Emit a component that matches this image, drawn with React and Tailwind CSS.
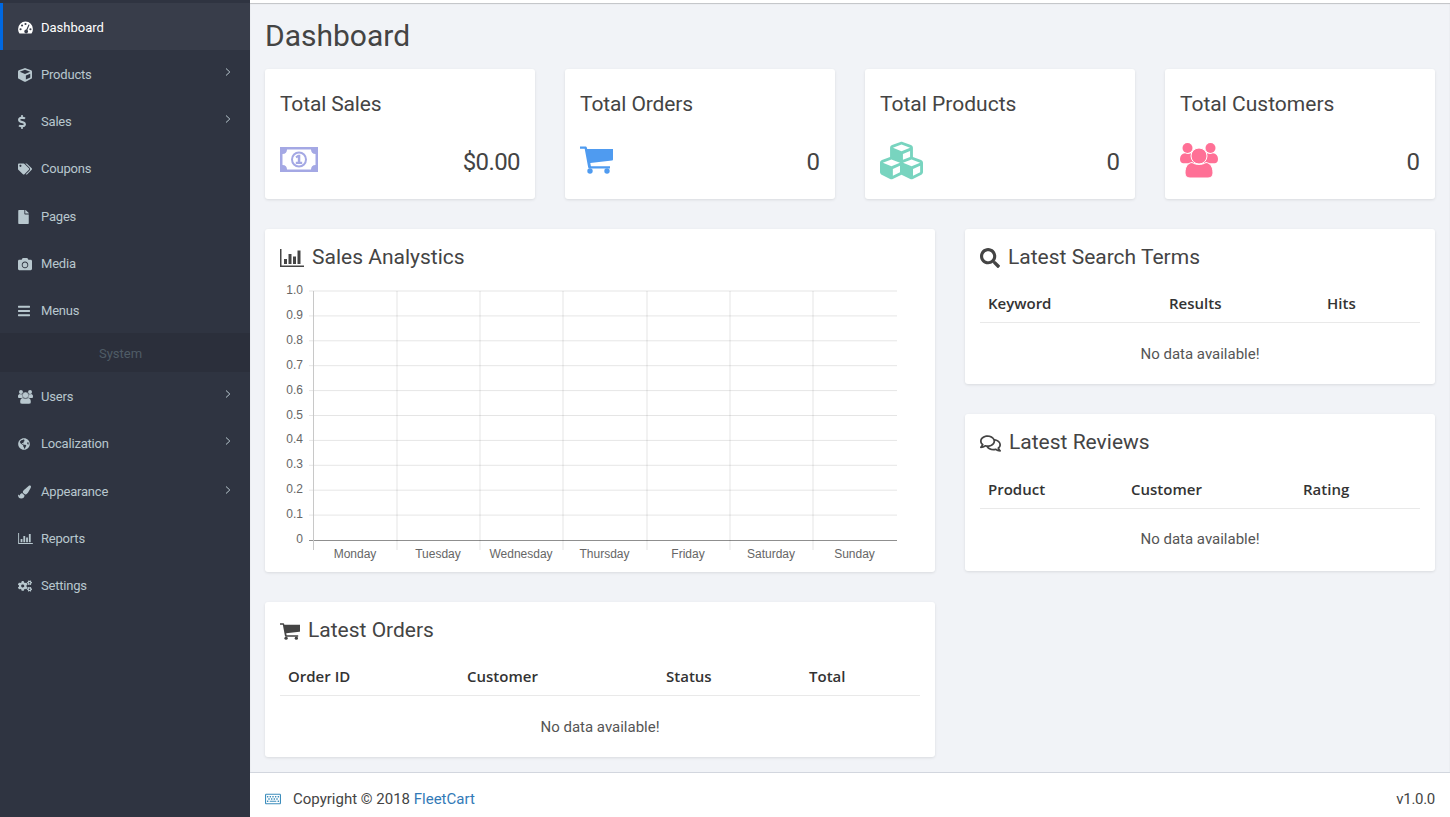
import React from "react";
import { FaCube, FaDollarSign, FaTags, FaFile, FaCamera, FaBars, FaGlobeAmericas, FaPaintBrush, FaCogs, FaCubes, FaSearch, FaRegComments, FaRegKeyboard } from "react-icons/fa";

function BarChartIcon({ className }) {
  return (
    <svg viewBox="0 0 24 18" className={className} fill="currentColor">
      <path d="M0 0h1.5v16.5H24V18H0z" />
      <path d="M4 10h3v5H4zM8.5 5h3v10h-3zM13 7.5h3V15h-3zM17.5 1.5h3V15h-3z" />
    </svg>
  );
}

function GaugeIcon({ className }) {
  return (
    <svg viewBox="0 0 14 12" className={className} fill="currentColor">
      <path d="M7 .4a6.9 6.9 0 0 1 6.9 6.9c0 1.6-.5 3-1.3 4.3H1.4C.6 10.300.1 8.900.1 7.300A6.900 6.900 0 0 1 7 .4z" />
      <g fill="#383d4a">
        <circle cx="2.400" cy="7.600" r="1" />
        <circle cx="3.800" cy="4.100" r="1" />
        <circle cx="7" cy="2.700" r="1" />
        <circle cx="11.600" cy="7.600" r="1" />
        <path d="M9.800 3.100l1 .4-2 4.800a1.800 1.800 0 1 1-1-.4z" />
      </g>
    </svg>
  );
}

function UsersIcon({ className, gap = "#ffffff" }) {
  return (
    <svg viewBox="0 0 38 35" className={className} fill="currentColor">
      <circle cx="7.500" cy="5" r="5" />
      <circle cx="30.500" cy="5" r="5" />
      <path d="M0 16c0-3.500 2-5.500 5-5.800 2 1 4 1 6 0 2 .3 4 2 4 5v5H3c-2 0-3-2-3-4.200zM38 16c0-3.500-2-5.500-5-5.800-2 1-4 1-6 0-2 .3-4 2-4 5v5h12c2 0 3-2 3-4.200z" />
      <circle cx="19" cy="13" r="8" stroke={gap} strokeWidth="1" />
      <path d="M5 30c0-6 2.500-10 7-10.500 4 2.600 10 2.600 14 0 4.500.5 7 4.500 7 10.500 0 3-2 5-5 5H10c-3 0-5-2-5-5z" stroke={gap} strokeWidth="1" />
    </svg>
  );
}

function BillIcon({ className }) {
  return (
    <svg viewBox="0 0 38 25" className={className}>
      <rect width="38" height="25" fill="#a4a8e4" />
      <path d="M7 2.500h24c0 2.500 1.500 4.500 4.500 4.500v11c-3 0-4.500 2-4.500 4.500H7c0-2.500-1.500-4.500-4.500-4.500V7c3 0 4.500-2 4.500-4.500z" fill="#fff" />
      <circle cx="19" cy="12.500" r="7" fill="#fff" stroke="#a4a8e4" strokeWidth="2" />
      <path d="M15.800 17h6.400v-2.200h-1.900V7.700h-2.300l-2.600 1.900 1.100 1.700 1.300-.9v4.400h-2z" fill="#a4a8e4" />
    </svg>
  );
}

function CartIcon({ className }) {
  return (
    <svg viewBox="0 0 33 28" className={className} fill="currentColor">
      <path d="M0 .5h5.700c.5 0 .9.300 1 .8L7.200 3H33v10.500c0 .6-.4 1-1 1.100L10.300 17l.5 2.700c0 .4.300.6.700.6H30v2.200H10c-1 0-1.700-.7-1.900-1.600L4.700 2.700H0z" />
      <circle cx="10" cy="25" r="2.700" />
      <circle cx="27" cy="25" r="2.700" />
    </svg>
  );
}

function Chevron({ className }) {
  return (
    <svg viewBox="0 0 6 8" className={className} fill="none" stroke="currentColor" strokeWidth="1">
      <path d="M1 .5L4.800 4 1 7.500" />
    </svg>
  );
}

function Nav({ icon, label, active, arrow, h = "h-[47px]", pt = "pt-[2px]", tr = "tracking-[-0.2px]" }) {
  return (
    <div className={`flex items-center ${h} ${pt} pl-[18px] pr-[19px] text-[13px] relative ${active ? "bg-[#383d4a] text-white" : "text-[#b8c7ce]"}`}>
      {active && <span className="absolute left-0 top-0 bottom-0 w-[3px] bg-[#0068e1]" />}
      <span className="w-[23px] flex items-center shrink-0">{icon}</span>
      <span className={tr}>{label}</span>
      {arrow && <Chevron className="ml-auto mb-[5px] w-[6px] h-[8px]" />}
    </div>
  );
}

function StatCard({ title, value, icon, tr = "", vtr = "" }) {
  return (
    <div className="bg-white rounded-[3px] shadow-[0_1px_3px_rgba(0,0,0,0.1)] h-[130px] px-[15px] pt-[21px]">
      <div className={`text-[21px] leading-[28px] text-[#444] ${tr}`}>{title}</div>
      <div className="flex items-center justify-between mt-[22px] h-[44px]">
        <div className="mb-[4px]">{icon}</div>
        <span className={`text-[24px] text-[#444] ${vtr}`}>{value}</span>
      </div>
    </div>
  );
}

function Panel({ icon, title, children, className = "", tr = "" }) {
  return (
    <div className={`bg-white rounded-[3px] shadow-[0_1px_3px_rgba(0,0,0,0.1)] px-[15px] ${className}`}>
      <div className="flex items-center h-[56px] pt-[2px] text-[21px] text-[#444]">
        {icon}
        <span className={tr}>{title}</span>
      </div>
      {children}
    </div>
  );
}

function EmptyTable({ cols, headers, mt = "", pt = "pt-[2px]" }) {
  return (
    <div className={mt}>
      <div className={`grid ${cols} h-[38px] items-center border-b border-[#e9e9e9] font-['Open_Sans',sans-serif] font-semibold text-[15px] text-[#333]`}>
        {headers.map((h) => <div key={h} className="pl-[8px]">{h}</div>)}
      </div>
      <div className={`h-[61px] flex items-center justify-center text-[15px] text-[#555] ${pt}`}>No data available!</div>
    </div>
  );
}

function Chart() {
  const xs = [314, 397, 480, 563, 647, 730, 813, 897];
  const ys = Array.from({ length: 11 }, (_, i) => 291 + i * 24.9);
  const yl = ["1.0", "0.9", "0.8", "0.7", "0.6", "0.5", "0.4", "0.3", "0.2", "0.1", "0"];
  const days = ["Monday", "Tuesday", "Wednesday", "Thursday", "Friday", "Saturday", "Sunday"];
  return (
    <svg width="640" height="280" viewBox="280 284 640 280" className="block" style={{ fontFamily: "'Liberation Sans',sans-serif" }}>
      {ys.map((y, i) => (
        <line key={i} x1="309" x2="897" y1={i === 10 ? 540.5 : y} y2={i === 10 ? 540.5 : y} stroke={i === 10 ? "#8f8f8f" : "rgba(0,0,0,0.1)"} />
      ))}
      {xs.slice(0, 7).map((x, i) => (
        <line key={x} x1={i === 0 ? x - 0.5 : x} x2={i === 0 ? x - 0.5 : x} y1="291" y2="550" stroke={i === 0 ? "#c8c8c8" : "rgba(0,0,0,0.1)"} />
      ))}
      {ys.map((y, i) => (
        <text key={i} x="303" y={y + 3} textAnchor="end" fontSize="12" fill="#666">{yl[i]}</text>
      ))}
      {days.map((d, i) => (
        <text key={d} x={(xs[i] + xs[i + 1]) / 2 - 0.5} y="558" textAnchor="middle" fontSize="12" fill="#666">{d}</text>
      ))}
    </svg>
  );
}

export default function App() {
  const side = "w-[14px] h-[14px]";
  return (
    <div className="flex h-[817px] w-[1450px] overflow-hidden bg-[#f1f3f7] font-['Roboto',sans-serif]">
      <aside className="w-[250px] shrink-0 bg-[#2f3441] pt-[3px]">
        <Nav icon={<GaugeIcon className="w-[15px] h-[13px]" />} label="Dashboard" active tr="" />
        <Nav icon={<FaCube className={side} />} label="Products" arrow />
        <Nav icon={<FaDollarSign className="w-[8px] h-[14px]" />} label="Sales" arrow />
        <Nav icon={<FaTags className={side} />} label="Coupons" />
        <Nav icon={<FaFile className="w-[11px] h-[14px]" />} label="Pages" h="h-[48px]" pt="pt-[4px]" />
        <Nav icon={<FaCamera className={side} />} label="Media" />
        <Nav icon={<FaBars className="w-[12px] h-[14px]" />} label="Menus" />
        <div className="h-[39px] bg-[#2b2f3b] flex items-center justify-center text-[13px] text-[#4f5c66] pr-[9px] pt-[2px]">System</div>
        <Nav icon={<UsersIcon className="w-[15px] h-[14px] text-[#b8c7ce]" gap="#2f3441" />} label="Users" arrow />
        <Nav icon={<FaGlobeAmericas className="w-[12px] h-[12px]" />} label="Localization" arrow />
        <Nav icon={<FaPaintBrush className="w-[13px] h-[14px]" />} label="Appearance" arrow h="h-[48px]" pt="pt-[4px]" />
        <Nav icon={<BarChartIcon className="w-[15px] h-[11px]" />} label="Reports" />
        <Nav icon={<FaCogs className={side} />} label="Settings" />
      </aside>
      <div className="flex-1 flex flex-col min-w-0">
        <main className="flex-1 px-[15px] border-t-[3px] border-t-white shadow-[inset_0_1px_1px_rgba(0,0,0,0.2)]">
          <h1 className="text-[30px] leading-[33px] text-[#444] mt-[16px] mb-[17px]">Dashboard</h1>
          <div className="grid grid-cols-4 gap-[30px]">
            <StatCard title="Total Sales" value="$0.00" tr="tracking-[-0.15px]" vtr="tracking-[-0.6px]" icon={<BillIcon className="w-[38px] h-[25px] mb-[2px]" />} />
            <StatCard title="Total Orders" value="0" tr="tracking-[-0.12px]" icon={<CartIcon className="w-[33px] h-[28px] text-[#4f9bf0]" />} />
            <StatCard title="Total Products" value="0" icon={<FaCubes className="w-[43px] h-[43px] text-[#78d4bf]" />} />
            <StatCard title="Total Customers" value="0" icon={<UsersIcon className="w-[38px] h-[35px] text-[#ff7096]" />} />
          </div>
          <div className="flex gap-[30px] mt-[30px]">
            <div className="w-[670px] flex flex-col gap-[30px]">
              <Panel title="Sales Analystics" className="h-[343px]" icon={<BarChartIcon className="w-[24px] h-[18px] mr-[8px] text-[#444]" />}>
                <div className="-mt-[1px]"><Chart /></div>
              </Panel>
              <Panel title="Latest Orders" className="h-[155px]" icon={<CartIcon className="w-[20px] h-[17px] mr-[8px] text-[#444]" />}>
                <EmptyTable cols="grid-cols-[179px_199px_143px_119px]" headers={["Order ID", "Customer", "Status", "Total"]} />
              </Panel>
            </div>
            <div className="w-[470px] flex flex-col gap-[30px]">
              <Panel title="Latest Search Terms" className="h-[155px]" icon={<FaSearch className="w-[20px] h-[20px] mr-[8px] text-[#444]" />}>
                <EmptyTable cols="grid-cols-[181px_158px_101px]" headers={["Keyword", "Results", "Hits"]} />
              </Panel>
              <Panel title="Latest Reviews" className="h-[157px]" icon={<FaRegComments className="w-[21px] h-[21px] mr-[8px] text-[#444]" />}>
                <EmptyTable mt="mt-[1px]" pt="" cols="grid-cols-[143px_172px_125px]" headers={["Product", "Customer", "Rating"]} />
              </Panel>
            </div>
          </div>
        </main>
        <footer className="h-[45px] shrink-0 bg-white border-t border-[#d2d6de] flex items-center px-[15px] pt-[8px] text-[15px] text-[#444]">
          <FaRegKeyboard className="w-[16px] h-[16px] text-[#3c8dbc] mr-[12px]" />
          <span>Copyright © 2018 <span className="text-[#337ab7]">FleetCart</span></span>
          <span className="ml-auto tracking-[-0.3px]">v1.0.0</span>
        </footer>
      </div>
    </div>
  );
}
